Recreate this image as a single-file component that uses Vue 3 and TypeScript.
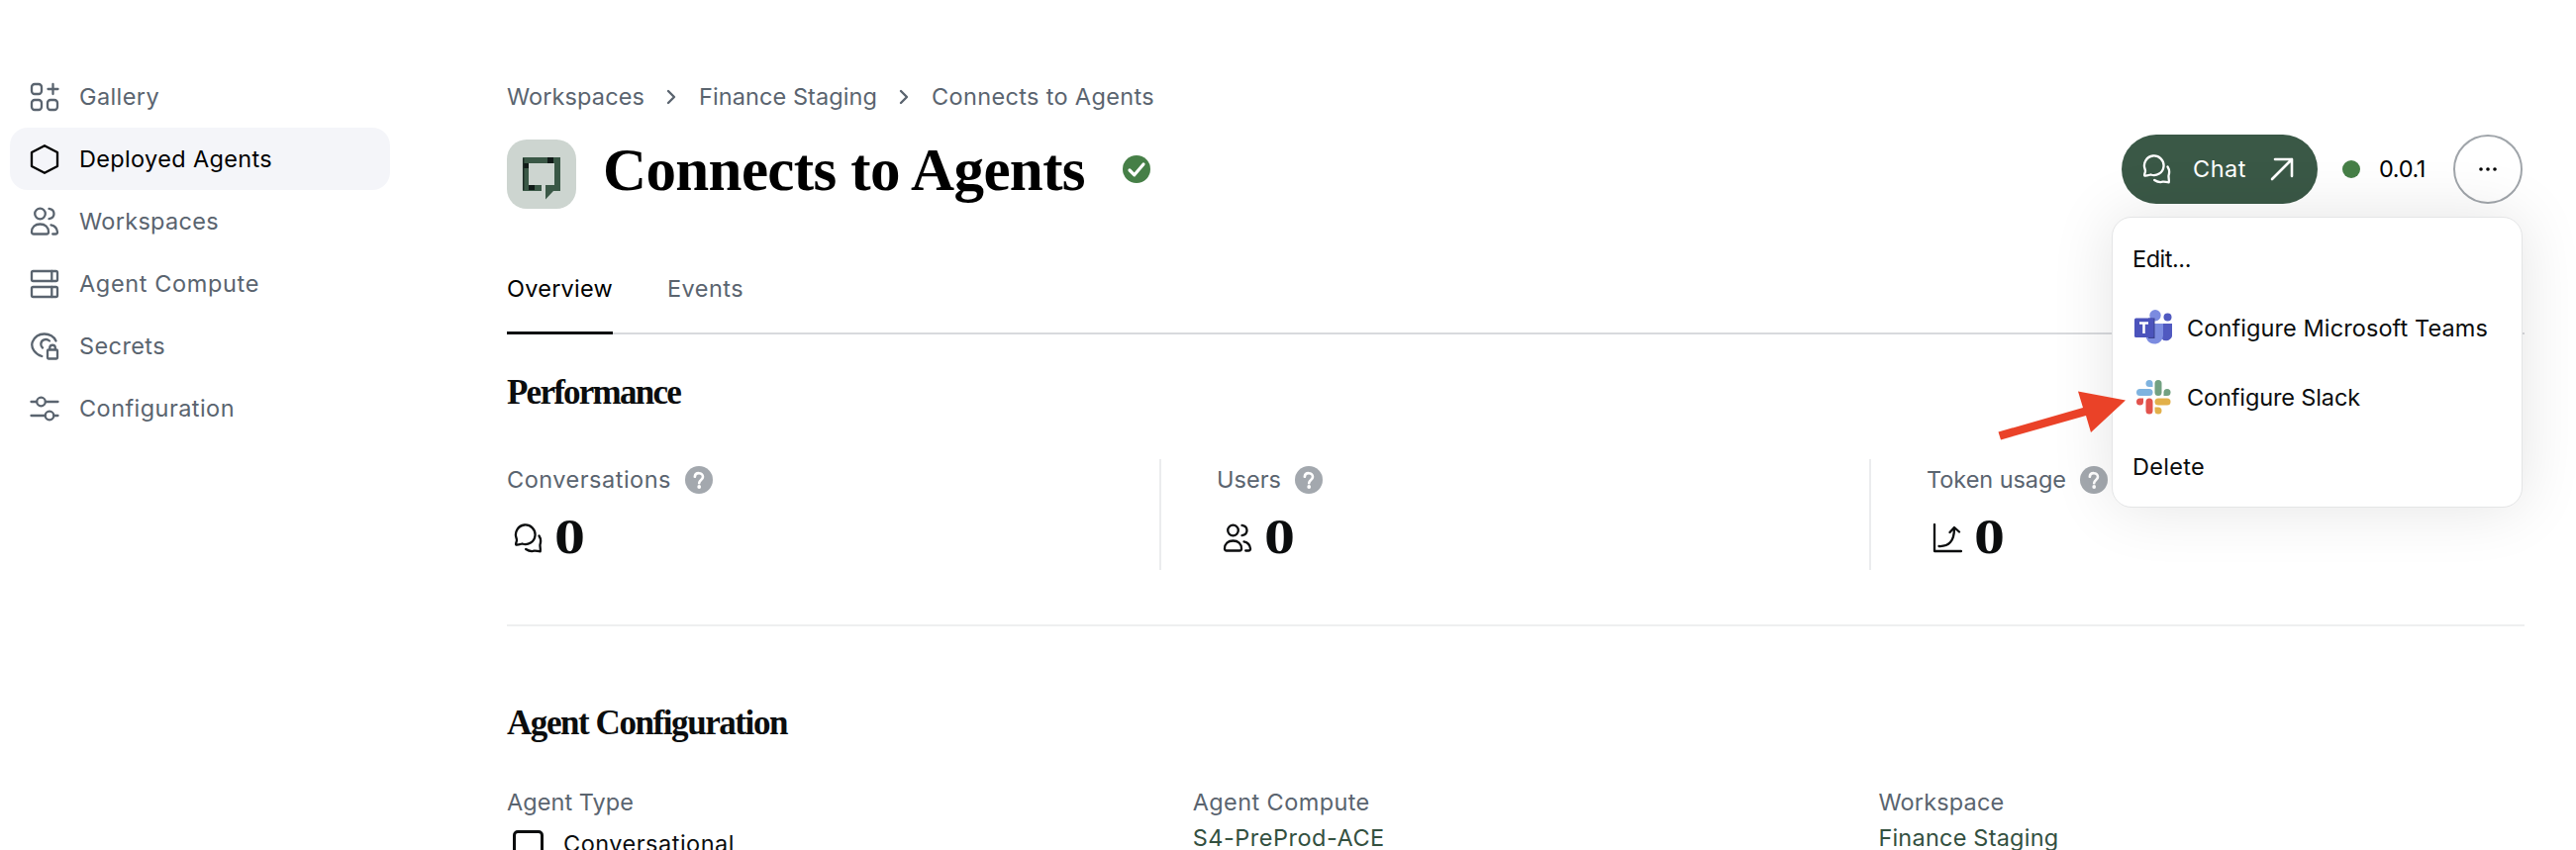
<script setup lang="ts">
import type { Directive } from 'vue'

type Fit = number
const vFit: Directive<HTMLElement, Fit> = {
  mounted(el, binding) {
    const apply = () => {
      el.style.letterSpacing = '0px'
      const count = Math.max(1, (el.textContent ?? '').trim().length)
      const natural = el.getBoundingClientRect().width
      el.style.letterSpacing = `${((binding.value - natural) / count).toFixed(3)}px`
    }
    apply()
    document.fonts?.ready.then(apply)
  },
}

const nav = [
  { label: 'Gallery', icon: 'gallery', w: 81 },
  { label: 'Deployed Agents', icon: 'hexagon', w: 195, active: true },
  { label: 'Workspaces', icon: 'users', w: 141 },
  { label: 'Agent Compute', icon: 'servers', w: 182 },
  { label: 'Secrets', icon: 'secret', w: 87 },
  { label: 'Configuration', icon: 'sliders', w: 157 },
]
const crumbs = [
  { label: 'Workspaces', w: 139 },
  { label: 'Finance Staging', w: 180 },
  { label: 'Connects to Agents', w: 225 },
]
const metrics = [
  { label: 'Conversations', icon: 'chat', w: 166 },
  { label: 'Users', icon: 'users', w: 65 },
  { label: 'Token usage', icon: 'growth', w: 141 },
]
</script>

<template>
  <div class="page">
    <svg class="defs" aria-hidden="true">
      <symbol id="i-gallery" viewBox="0 0 30 30"><rect x="2" y="2" width="10" height="10" rx="3" /><rect x="2" y="18" width="10" height="10" rx="3" /><rect x="18" y="18" width="10" height="10" rx="3" /><path d="M23.500 2v10M18.500 7h10" /></symbol>
      <symbol id="i-hexagon" viewBox="0 0 30 30"><path d="M15 1.200 28 8v14l-13 6.800L2 22V8Z" /></symbol>
      <symbol id="i-users" viewBox="0 0 30 30"><circle cx="10.500" cy="7" r="5.300" /><path d="M2 25.500c0-5 3.500-8 8.500-8s8.500 3 8.500 8c0 1.200-.7 2-2 2H4c-1.300 0-2-.8-2-2ZM19.500 1.800c3.500.5 5 2.500 5 5.200s-1.500 4.700-5 5.200M21.500 18.300c3.500.8 6.200 3.500 6.500 7.200 0 1.200-.7 2-2 2h-2.800" /></symbol>
      <symbol id="i-servers" viewBox="0 0 30 30"><rect x="2" y="2" width="26" height="10" rx="1.500" /><rect x="2" y="18" width="26" height="10" rx="1.500" /><path d="M22.300 2v10M22.300 18v10" /></symbol>
      <symbol id="i-secret" viewBox="0 0 30 30"><path d="M26.500 9.500C22 .5 7.500-.5 2.800 10.500c-2.200 6 3 12.800 9.500 14.500M20 9.500c-3.500-3-8.500-1.200-8.700 3.200 0 1.500.5 2.800 1.700 3.800" /><rect x="18" y="18.500" width="10" height="9" rx="1" /><path d="M20.300 18v-2a2.800 2.800 0 0 1 5.500 0v2" /></symbol>
      <symbol id="i-sliders" viewBox="0 0 30 30"><path d="M1.500 8H7M16 8h12.500M1.500 22H15.500M24.500 22h4" /><circle cx="11.500" cy="8" r="4.300" /><circle cx="20" cy="22" r="4.300" /></symbol>
      <symbol id="i-chat" viewBox="0 0 30 30"><path d="M3.500 14.500A9.800 9.800 0 1 1 9.500 20.500C7.500 21 5 21.800 3.200 21.500c-.5-1.700.8-3 .8-4.800ZM26.500 12.500c2.300 3.500 2 6 1 9-.2 2 .7 4 .2 6.800-2.200 0-4-.8-6-.6-3 .8-6 0-8.500-1.700" /></symbol>
      <symbol id="i-growth" viewBox="0 0 30 30"><path d="M2 1v27h27M6.500 23c10 .5 15.500-5 15.500-18M17.500 9 22 4l5 4.500" /></symbol>
    </svg>

    <aside class="side">
      <a v-for="n in nav" :key="n.label" class="nav" :class="{ active: n.active }">
        <svg class="ic"><use :href="'#i-' + n.icon" /></svg>
        <span v-fit="n.w">{{ n.label }}</span>
      </a>
    </aside>

    <main class="main">
      <nav class="crumbs">
        <template v-for="(c, i) in crumbs" :key="c.label">
          <svg v-if="i" class="chev" viewBox="0 0 12 16"><path d="M3 2l6 6-6 6" /></svg>
          <span v-fit="c.w">{{ c.label }}</span>
        </template>
      </nav>

      <header class="head">
        <div class="logo">
          <svg viewBox="0 0 70 70"><path fill="#3a5846" d="M16 18h38v34h-7l-8 8.500V46h9V24H22v22h13v6H16Z" /><path fill="#101a17" d="M41 18h6v6h-6zM16 24h6v5h-6zM22 46h6v5h-6z" /><path d="M16.700 19v32" stroke="#1c2b25" stroke-width="1.500" /></svg>
        </div>
        <h1 v-fit="487">Connects to Agents</h1>
        <svg class="check" viewBox="0 0 28 28"><circle cx="14" cy="14" r="14" fill="#467f47" /><path d="M7 15l4.800 4.800L21 9" /></svg>
        <div class="actions">
          <button class="chat">
            <svg class="ic"><use href="#i-chat" /></svg>
            <span v-fit="54">Chat</span>
            <svg class="go" viewBox="0 0 24 24"><path d="M5 2h17v17M22 2 2 22" /></svg>
          </button>
          <i class="dot" />
          <span v-fit="47" class="ver">0.0.1</span>
          <button class="more"><svg viewBox="0 0 20 6"><circle cx="3" cy="3" r="1.800" /><circle cx="10" cy="3" r="1.800" /><circle cx="17" cy="3" r="1.800" /></svg></button>
          <div class="menu">
            <div class="mi"><span v-fit="59">Edit...</span></div>
            <div class="mi">
              <svg viewBox="0 0 40 40"><circle cx="23" cy="6.700" r="5.700" fill="#7b8be0" /><circle cx="35.500" cy="8.500" r="4" fill="#5059c0" /><path fill="#5059c0" d="M29 15h11v10.500a6 6 0 0 1-11 4Z" /><path fill="#7b8be0" d="M14 15h17v12a8.800 8.800 0 0 1-17 3Z" /><path fill="#3b438f" d="M16 9.500h6.500V30H16z" /><rect x="2" y="9.500" width="19.500" height="19.500" rx="1.500" fill="#4b53bc" /><path d="M7 14.500h9M11.500 14.500v10.500" stroke="#fff" stroke-width="2.500" /></svg>
              <span v-fit="304">Configure Microsoft Teams</span>
            </div>
            <div class="mi">
              <svg viewBox="-1 1 40 40"><g fill="#7fb3df"><path d="M12.500 6.500a3.500 3.500 0 1 1 7 0V10H16a3.500 3.500 0 0 1-3.500-3.500Z" /><rect x="3" y="12" width="16.500" height="7" rx="3.500" /></g><g fill="#72a182"><rect x="21.500" y="3" width="7" height="16" rx="3.500" /><path d="M30.500 19v-3.500a3.500 3.500 0 1 1 3.500 3.500Z" /></g><g fill="#e2b04a"><rect x="21.500" y="21.500" width="16" height="7" rx="3.500" /><path d="M21.500 30.500H25a3.500 3.500 0 1 1-3.500 3.500Z" /></g><g fill="#e2524c"><path d="M10 21.500V25a3.500 3.500 0 1 1-3.500-3.500Z" /><rect x="12.500" y="21.500" width="7" height="16" rx="3.500" /></g></svg>
              <span v-fit="175">Configure Slack</span>
            </div>
            <div class="mi"><span v-fit="73">Delete</span></div>
            <svg class="pointer" viewBox="0 0 140 60"><path fill="#ea4228" d="M9.500 43.500 95 19 90 2.500 138 11.500 103 44 98 27 12 51.500Z" /></svg>
          </div>
        </div>
      </header>

      <div class="tabs"><a class="on"><span v-fit="107">Overview</span></a><a><span v-fit="77">Events</span></a></div>

      <h2 class="perf"><span v-fit="175">Performance</span></h2>
      <section class="metrics">
        <div v-for="m in metrics" :key="m.label" class="metric">
          <div class="ml"><span v-fit="m.w">{{ m.label }}</span>
            <svg viewBox="0 0 28 28"><circle cx="14" cy="14" r="14" fill="#a3a8ae" /><path d="M9.800 10.800c.3-5 8.300-4.700 8.200.1 0 3-3.800 3-3.800 6.300" /><circle cx="14.200" cy="21" r="1.900" fill="#fff" /></svg>
          </div>
          <div class="mv"><svg class="ic"><use :href="'#i-' + m.icon" /></svg><b>0</b></div>
        </div>
      </section>

      <h2 class="conf"><span v-fit="283">Agent Configuration</span></h2>
      <section class="config">
        <div class="cell"><span v-fit="128" class="cl">Agent Type</span><div class="cv type"><i class="box" /><span v-fit="173">Conversational</span></div></div>
        <div class="cell"><span v-fit="179" class="cl">Agent Compute</span><div class="cv"><span v-fit="194">S4-PreProd-ACE</span></div></div>
        <div class="cell"><span v-fit="127" class="cl">Workspace</span><div class="cv"><span v-fit="182">Finance Staging</span></div></div>
      </section>
    </main>
  </div>
</template>

<style>
html, body { margin: 0; background: #fff; overflow: hidden; }
</style>
<style scoped>
* { box-sizing: border-box; }
.page { display: flex; width: 2602px; height: 859px; overflow: hidden; background: #fff; color: #0b0d0e; font: 400 23.5px/30px Inter, "DejaVu Sans", sans-serif; white-space: nowrap; }
.defs { position: absolute; width: 0; height: 0; }
span { flex: none; display: inline-block; }
svg { flex: none; display: block; }
.ic { width: 30px; height: 30px; fill: none; stroke: currentColor; stroke-width: 2.3px; stroke-linecap: round; stroke-linejoin: round; }
.side { flex: none; width: 512px; padding: 66px 0 0 10px; color: #5a646f; }
.nav { display: flex; align-items: center; gap: 20px; width: 384px; height: 63px; padding: 0 20px; border-radius: 18px; }
.nav.active { background: #f4f5f9; color: #000; }
.main { flex: none; width: 2038px; }
.crumbs { display: flex; align-items: center; height: 30px; margin-top: 83px; color: #5a646f; }
.chev { width: 12px; height: 16px; margin: 0 22px 0 21px; fill: none; stroke: currentColor; stroke-width: 2.4px; stroke-linecap: round; stroke-linejoin: round; }
.head { display: flex; align-items: center; height: 70px; margin-top: 28px; }
.logo { flex: none; width: 70px; height: 70px; border-radius: 20px; background: #cdd5d0; }
h1 { margin: -9px 38px 0 27px; font: 700 61px/70px "Liberation Serif", serif; color: #000; }
.check { width: 28px; height: 28px; margin-bottom: 10px; }
.check path { fill: none; stroke: #fff; stroke-width: 3.2px; stroke-linecap: round; stroke-linejoin: round; }
.actions { position: relative; display: flex; align-items: center; margin: 0 0 10px auto; padding-right: 2px; }
button { font: inherit; padding: 0; }
.chat { display: flex; align-items: center; width: 198px; height: 70px; padding-left: 20px; border: 0; border-radius: 35px; background: #3a5846; color: #fff; }
.chat span { margin-left: 22px; }
.go { width: 24px; height: 24px; margin-left: 24px; fill: none; stroke: #fff; stroke-width: 2.6px; stroke-linecap: round; stroke-linejoin: round; }
.dot { width: 18px; height: 18px; margin: 0 19px 0 25px; border-radius: 50%; background: #467f47; }
.ver { color: #000; }
.more { display: flex; align-items: center; justify-content: center; width: 70px; height: 70px; margin-left: 28px; border: 2px solid #a0a5aa; border-radius: 50%; background: #fff; }
.more svg { width: 20px; height: 6px; }
.menu { position: absolute; top: 83px; right: 2px; z-index: 2; width: 415px; height: 294px; padding: 7px 0 0 20px; border: 1px solid #e4e5e6; border-radius: 20px; background: #fff; color: #0b0d0e; box-shadow: 0 0 64px rgba(0,0,0,.11); }
.mi { display: flex; align-items: center; height: 70px; }
.mi svg { width: 40px; height: 40px; margin-right: 15px; fill: none; }
.pointer { position: absolute; left: -125px; top: 173px; width: 140px; height: 60px; }
.tabs { display: flex; gap: 55px; height: 68px; margin-top: 59px; border-bottom: 2px solid #d8dadd; color: #5a646f; }
.tabs a { height: 68px; padding-top: 7px; }
.tabs .on { border-bottom: 3px solid #0e1112; color: #000; }
h2 { margin: 0; font: 700 35px/40px "Liberation Serif", serif; color: #0b0d0e; }
.perf { margin-top: 39px; }
.metrics { display: flex; height: 169px; margin-top: 47px; border-bottom: 2px solid #eeeff0; }
.metric { flex: none; width: 661px; height: 112px; padding-top: 6px; border-right: 2px solid #ebecee; }
.metric:nth-child(2) { width: 717px; padding-left: 56px; }
.metric:nth-child(3) { padding-left: 56px; border-right: 0; }
.ml { display: flex; align-items: center; gap: 14px; height: 30px; color: #5a646f; }
.ml svg { width: 28px; height: 28px; fill: none; stroke: #fff; stroke-width: 2.6px; stroke-linecap: round; }
.ml svg circle { stroke: none; }
.mv { display: flex; align-items: center; height: 50px; margin-top: 18px; padding-left: 6px; }
.mv .ic { margin-top: 2px; }
.mv b { display: block; margin: -2px 0 0 12px; font: 700 50px/50px "Liberation Serif", serif; transform: scaleX(1.24); transform-origin: left; }
.conf { margin-top: 78px; }
.config { display: flex; height: 90px; margin-top: 45px; }
.cell { flex: none; width: 692.7px; }
.cl { display: block; width: max-content; color: #5a646f; }
.cv { display: flex; color: #33503f; margin-top: 6px; }
.type { color: #0b0d0e; margin-top: 0; align-items: flex-start; }
.type span { margin-top: 12px; }
.box { width: 31px; height: 31px; margin: 13px 20px 0 6px; border: 3px solid #0b0d0e; border-radius: 5px; }
</style>
